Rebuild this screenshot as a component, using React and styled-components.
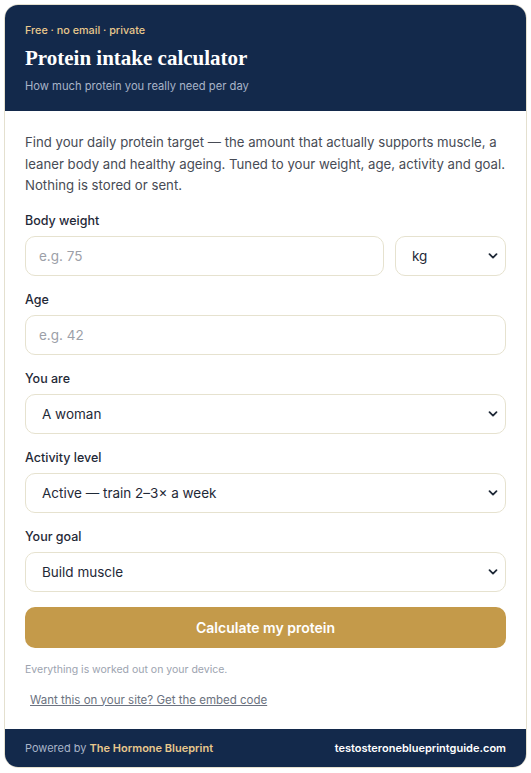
import styled, { createGlobalStyle } from "styled-components";

const GlobalStyle = createGlobalStyle`
    * { box-sizing: border-box; }
    body {
        margin: 0;
        padding: 4px;
        background: #ffffff;
        font-family: Inter, "Liberation Sans", sans-serif;
    }
`
const Card = styled.div`
    width: 523px;
    height: 764px;
    border: 1px solid #e4e0cf;
    border-radius: 14px;
    overflow: hidden;
    display: flex;
    flex-direction: column;
    background: #fff;
`
const Header = styled.div`
    background: #13294b;
    padding: 19px 20px 18px;
    height: 106px;
`
const Eyebrow = styled.div`
    font-size: 10.8px;
    font-weight: 500;
    color: #e9c88d;
`
const Title = styled.h1`
    margin: 9px 0 8px;
    font-family: "Liberation Serif", "DejaVu Serif", serif;
    font-size: 21px;
    font-weight: 700;
    color: #fff;
`
const Sub = styled.div`
    font-size: 11.2px;
    color: #a8b4c8;
`
const Body = styled.div`
    flex: 1;
    padding: 21px 20px 0;
    display: flex;
    flex-direction: column;
`
const Intro = styled.p`
    margin: 0 0 16px;
    font-size: 13.2px;
    line-height: 21.5px;
    color: #474b55;
`
const Field = styled.div`
    margin-bottom: 16px;
`
const Label = styled.div`
    font-size: 12.5px;
    font-weight: 500;
    color: #1f2937;
    margin-bottom: 8px;
`
const Row = styled.div`
    display: flex;
    gap: 11px;
`
const Input = styled.input`
    flex: 1;
    width: 100%;
    height: 40px;
    border: 1px solid #e6e2cf;
    border-radius: 10px;
    padding: 0 13px;
    font-family: inherit;
    font-size: 13.5px;
    color: #1f2937;
    &::placeholder { color: #9ca0a8; }
`
const SelectWrap = styled.div`
    position: relative;
    width: ${p => p.$w || "100%"};
    flex: ${p => p.$w ? "none" : "1"};
`
const Select = styled.select`
    appearance: none;
    width: 100%;
    height: 40px;
    border: 1px solid #e6e2cf;
    border-radius: 10px;
    padding: 0 16px;
    background: #fff;
    font-family: inherit;
    font-size: 13.5px;
    color: #1f2937;
`
const Chevron = styled.svg`
    position: absolute;
    right: 8px;
    top: 15px;
    pointer-events: none;
`
const Button = styled.button`
    height: 41px;
    margin-top: -1px;
    border: none;
    border-radius: 10px;
    background: #c49a4a;
    color: #fff;
    font-family: inherit;
    font-size: 14px;
    font-weight: 600;
`
const Note = styled.div`
    margin-top: 15px;
    font-size: 10.5px;
    color: #9ca3af;
`
const EmbedLink = styled.a`
    margin: 17px 0 0 5px;
    font-size: 11.5px;
    color: #6b7280;
    text-decoration: underline;
`
const Footer = styled.div`
    height: 38px;
    background: #13294b;
    padding: 0 20px;
    display: flex;
    align-items: center;
    justify-content: space-between;
    font-size: 11px;
    color: #a8b4c8;
    > b { color: #fff; font-weight: 600; }
`
const Brand = styled.span`
    color: #e9c88d;
    font-weight: 600;
`

const Arrow = () => (
    <Chevron width="10" height="10" viewBox="0 0 10 10">
        <path d="M1.5 3.2 5 6.6 8.5 3.2" fill="none" stroke="#1f2937" strokeWidth="1.8" strokeLinecap="round" strokeLinejoin="round" />
    </Chevron>
)

const Dropdown = ({ value, w }) => (
    <SelectWrap $w={w}>
        <Select defaultValue={value}>
            <option>{value}</option>
        </Select>
        <Arrow />
    </SelectWrap>
)

const App = () => {
    return (
        <>
            <GlobalStyle />
            <Card>
                <Header>
                    <Eyebrow>Free · no email · private</Eyebrow>
                    <Title>Protein intake calculator</Title>
                    <Sub>How much protein you really need per day</Sub>
                </Header>
                <Body>
                    <Intro>
                        Find your daily protein target — the amount that actually supports muscle, a leaner body and healthy ageing. Tuned to your weight, age, activity and goal. Nothing is stored or sent.
                    </Intro>
                    <Field>
                        <Label>Body weight</Label>
                        <Row>
                            <Input placeholder="e.g. 75" />
                            <Dropdown value="kg" w="111px" />
                        </Row>
                    </Field>
                    <Field>
                        <Label>Age</Label>
                        <Row><Input placeholder="e.g. 42" /></Row>
                    </Field>
                    <Field>
                        <Label>You are</Label>
                        <Dropdown value="A woman" />
                    </Field>
                    <Field>
                        <Label>Activity level</Label>
                        <Dropdown value="Active — train 2–3× a week" />
                    </Field>
                    <Field>
                        <Label>Your goal</Label>
                        <Dropdown value="Build muscle" />
                    </Field>
                    <Button>Calculate my protein</Button>
                    <Note>Everything is worked out on your device.</Note>
                    <EmbedLink href="#">Want this on your site? Get the embed code</EmbedLink>
                </Body>
                <Footer>
                    <span>Powered by <Brand>The Hormone Blueprint</Brand></span>
                    <b>testosteroneblueprintguide.com</b>
                </Footer>
            </Card>
        </>
    );
};

export default App;
